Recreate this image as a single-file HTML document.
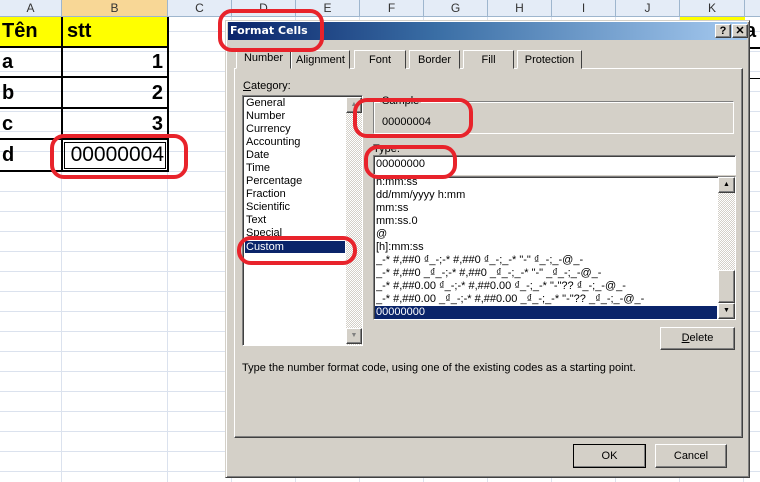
<!DOCTYPE html><html><head><meta charset="utf-8"><style>
*{margin:0;padding:0;box-sizing:border-box}
body{width:760px;height:482px;overflow:hidden;background:#fff;font-family:"Liberation Sans",sans-serif;position:relative}
.a{position:absolute}
.hd{top:0;height:17px;background:#e4ecf7;border-right:1px solid #9eb6ce;border-bottom:1px solid #9eb6ce;text-align:center;font:12px "Liberation Sans",sans-serif;color:#333;line-height:17px}
.cell{font:bold 20px "Liberation Sans",sans-serif;border-right:2px solid #000;border-bottom:2px solid #000}
.s{font:11px "Liberation Sans",sans-serif;color:#000;white-space:nowrap}
.btn{background:#d4d0c8;border:1px solid;border-color:#fff #404040 #404040 #fff;box-shadow:inset -1px -1px #808080;text-align:center;font:11px "Liberation Sans",sans-serif;line-height:21px}
.tab{top:50px;height:19px;background:#d4d0c8;border:1px solid;border-color:#fff #404040 #d4d0c8 #fff;font:11px "Liberation Sans",sans-serif;text-align:center;line-height:18px}
.red{border:4px solid #e8232b;border-radius:14px}
.sunk{border:1px solid;border-color:#808080 #fff #fff #808080;box-shadow:inset 1px 1px #404040}
</style></head><body>
<div class="a" style="left:0;top:0;width:760px;height:482px;background:repeating-linear-gradient(180deg,transparent 0 19px,#dbe2ee 19px 20px) 0 12px/100% 100%"></div>
<div class="a" style="left:167px;top:0;width:600px;height:482px;background:repeating-linear-gradient(90deg,#dbe2ee 0 1px,transparent 1px 64px)"></div>
<div class="a" style="left:61px;top:0;width:1px;height:482px;background:#dbe2ee"></div>
<div class="a hd" style="left:0;width:62px">A</div>
<div class="a hd" style="left:62px;width:106px;background:#f8d796">B</div>
<div class="a hd" style="left:168px;width:64px">C</div>
<div class="a hd" style="left:232px;width:64px">D</div>
<div class="a hd" style="left:296px;width:64px">E</div>
<div class="a hd" style="left:360px;width:64px">F</div>
<div class="a hd" style="left:424px;width:64px">G</div>
<div class="a hd" style="left:488px;width:64px">H</div>
<div class="a hd" style="left:552px;width:64px">I</div>
<div class="a hd" style="left:616px;width:64px">J</div>
<div class="a hd" style="left:680px;width:65px">K</div>
<div class="a hd" style="left:745px;width:20px"></div>
<div class="a" style="left:0;top:17px;width:168px;height:30px;background:#ff0"></div>
<div class="a" style="left:680px;top:17px;width:65px;height:3px;background:#ff0"></div>
<div class="a cell" style="left:0;top:17px;width:63px;height:31px;padding:3px 2px">Tên</div>
<div class="a cell" style="left:61px;top:17px;width:108px;height:31px;padding:3px 4px;border-left:2px solid #000">stt</div>
<div class="a cell" style="left:0;top:46px;width:63px;height:32px;padding:5px 2px">a</div>
<div class="a cell" style="left:61px;top:46px;width:108px;height:32px;padding:5px 4px;text-align:right;border-left:2px solid #000">1</div>
<div class="a cell" style="left:0;top:77px;width:63px;height:32px;padding:5px 2px">b</div>
<div class="a cell" style="left:61px;top:77px;width:108px;height:32px;padding:5px 4px;text-align:right;border-left:2px solid #000">2</div>
<div class="a cell" style="left:0;top:108px;width:63px;height:32px;padding:5px 2px">c</div>
<div class="a cell" style="left:61px;top:108px;width:108px;height:32px;padding:5px 4px;text-align:right;border-left:2px solid #000">3</div>
<div class="a cell" style="left:0;top:139px;width:63px;height:33px;padding:5px 2px">d</div>
<div class="a cell" style="left:61px;top:139px;width:108px;height:33px;padding:4px 3px;text-align:right;border-left:2px solid #000;font-weight:normal;font-size:21px;outline:1px solid #000;outline-offset:-4px">00000004</div>
<div class="a" style="left:745px;top:20px;font:bold 20px 'Liberation Sans';">a</div>
<div class="a" style="left:745px;top:47px;width:15px;border-top:2px solid #000"></div>
<div class="a" style="left:745px;top:78px;width:15px;border-top:1px solid #000"></div>

<div class="a" style="left:225px;top:20px;width:525px;height:458px;background:#d4d0c8;border:1px solid;border-color:#d4d0c8 #404040 #404040 #d4d0c8;box-shadow:inset 1px 1px #fff,inset -1px -1px #808080"></div>
<div class="a" style="left:228px;top:22px;width:519px;height:18px;background:linear-gradient(90deg,#0a246a,#3a6ea5 40%,#a6caf0)"></div>
<div class="a" style="left:230px;top:23px;color:#fff;font:bold 11px 'DejaVu Sans',sans-serif;line-height:16px">Format Cells</div>
<div class="a btn" style="left:715px;top:24px;width:16px;height:14px;line-height:12px;font-weight:bold">?</div>
<div class="a btn" style="left:732px;top:24px;width:16px;height:14px;line-height:12px;font-weight:bold">✕</div>

<div class="a" style="left:234px;top:68px;width:509px;height:370px;border:1px solid;border-color:#fff #404040 #404040 #fff;box-shadow:inset -1px -1px #808080"></div>
<div class="a tab" style="left:236px;top:48px;width:55px;height:21px">Number</div>
<div class="a tab" style="left:291px;width:59px">Alignment</div>
<div class="a tab" style="left:354px;width:52px">Font</div>
<div class="a tab" style="left:409px;width:51px">Border</div>
<div class="a tab" style="left:463px;width:51px">Fill</div>
<div class="a tab" style="left:517px;width:65px">Protection</div>

<div class="a s" style="left:243px;top:80px"><u>C</u>ategory:</div>
<div class="a sunk" style="left:242px;top:95px;width:121px;height:251px;background:#fff"></div>
<div class="a" style="left:346px;top:97px;width:16px;height:248px;background:repeating-conic-gradient(#fff 0 25%,#d4d0c8 0 50%) 0 0/2px 2px"></div>
<div class="a btn" style="left:346px;top:97px;width:16px;height:16px;line-height:14px;font-size:7px;color:#808080">▲</div>
<div class="a btn" style="left:346px;top:328px;width:16px;height:16px;line-height:14px;font-size:7px;color:#808080">▼</div>
<div class="a s" style="left:246px;top:97px;line-height:13px">General<br>Number<br>Currency<br>Accounting<br>Date<br>Time<br>Percentage<br>Fraction<br>Scientific<br>Text<br>Special</div>
<div class="a s" style="left:245px;top:241px;width:100px;height:12px;background:#0a246a;color:#fff;line-height:12px;padding-left:1px">Custom</div>

<div class="a" style="left:373px;top:101px;width:361px;height:33px;border:1px solid;border-color:#808080 #fff #fff #808080;box-shadow:inset 1px 1px #fff,1px 1px #808080 inset"></div>
<div class="a s" style="left:380px;top:95px;background:#d4d0c8;padding:0 2px">Sample</div>
<div class="a s" style="left:382px;top:116px">00000004</div>
<div class="a s" style="left:373px;top:143px">Type:</div>
<div class="a sunk" style="left:373px;top:155px;width:363px;height:20px;background:#fff"></div>
<div class="a s" style="left:376px;top:158px">00000000</div>
<div class="a sunk" style="left:373px;top:176px;width:363px;height:144px;background:#fff;overflow:hidden"></div>
<div class="a s" style="left:376px;top:176px;line-height:13px;height:130px;overflow:hidden">h:mm:ss<br>dd/mm/yyyy h:mm<br>mm:ss<br>mm:ss.0<br>@<br>[h]:mm:ss<br>_-* #,##0 ₫_-;-* #,##0 ₫_-;_-* "-" ₫_-;_-@_-<br>_-* #,##0 _₫_-;-* #,##0 _₫_-;_-* "-" _₫_-;_-@_-<br>_-* #,##0.00 ₫_-;-* #,##0.00 ₫_-;_-* "-"?? ₫_-;_-@_-<br>_-* #,##0.00 _₫_-;-* #,##0.00 _₫_-;_-* "-"?? _₫_-;_-@_-</div>
<div class="a s" style="left:375px;top:306px;width:342px;height:13px;background:#0a246a;color:#fff;line-height:13px;padding-left:1px">00000000</div>
<div class="a" style="left:718px;top:177px;width:17px;height:142px;background:repeating-conic-gradient(#fff 0 25%,#d4d0c8 0 50%) 0 0/2px 2px"></div>
<div class="a btn" style="left:718px;top:177px;width:17px;height:16px;line-height:14px;font-size:7px">▲</div>
<div class="a btn" style="left:718px;top:270px;width:17px;height:33px"></div>
<div class="a btn" style="left:718px;top:303px;width:17px;height:16px;line-height:14px;font-size:7px">▼</div>
<div class="a btn" style="left:660px;top:327px;width:75px;height:23px"><u>D</u>elete</div>
<div class="a s" style="left:242px;top:362px">Type the number format code, using one of the existing codes as a starting point.</div>
<div class="a btn" style="left:573px;top:444px;width:73px;height:24px;border:1px solid #000;line-height:22px">OK</div>
<div class="a btn" style="left:655px;top:444px;width:72px;height:24px;line-height:22px">Cancel</div>

<div class="a red" style="left:218px;top:9px;width:106px;height:43px"></div>
<div class="a red" style="left:353px;top:98px;width:120px;height:40px"></div>
<div class="a red" style="left:364px;top:145px;width:93px;height:34px"></div>
<div class="a red" style="left:237px;top:236px;width:120px;height:29px"></div>
<div class="a red" style="left:50px;top:134px;width:138px;height:45px"></div>
</body></html>
